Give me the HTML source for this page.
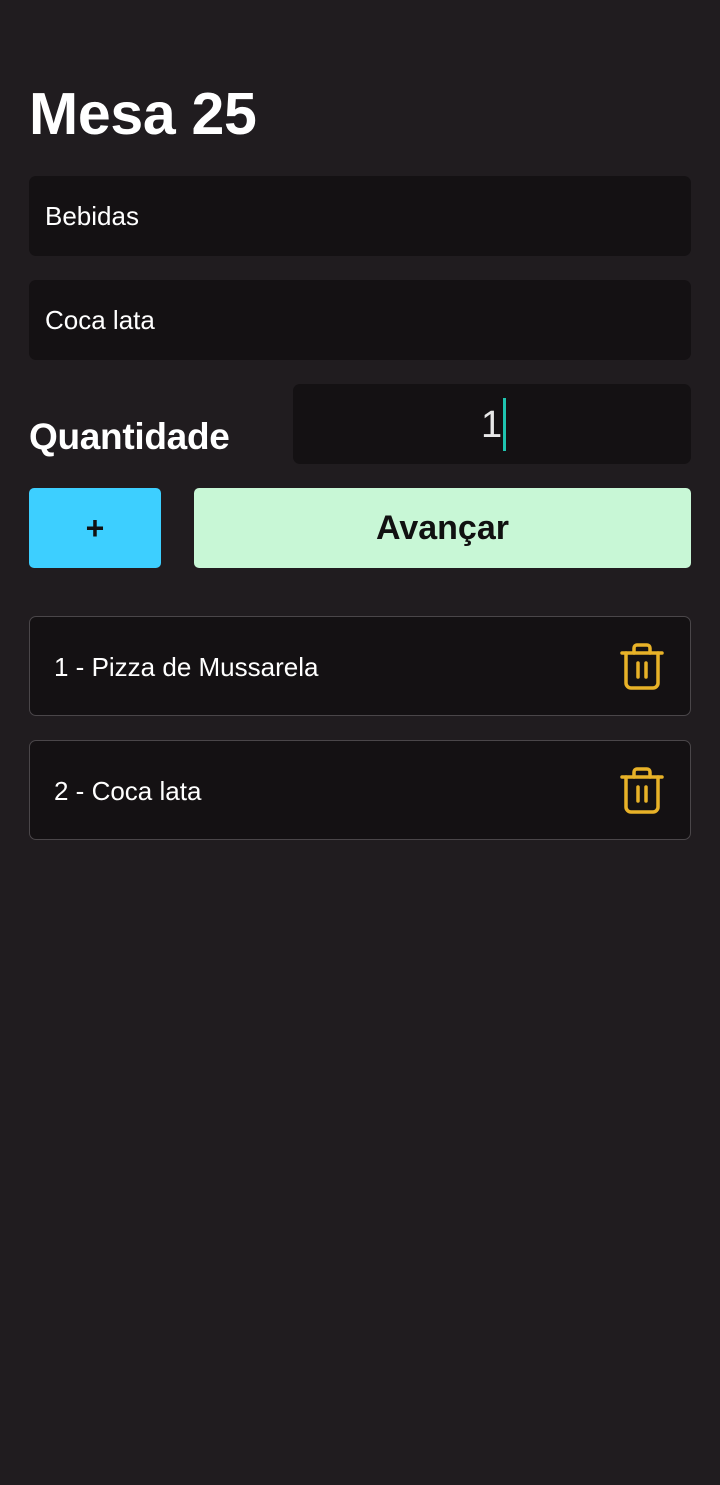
<!DOCTYPE html>
<html><head><meta charset="utf-8"><style>
*{margin:0;padding:0;box-sizing:border-box}
body{width:720px;height:1485px;background:#201c1f;font-family:"Liberation Sans",Arial,sans-serif;color:#fff;position:relative;overflow:hidden}
.a{position:absolute}
.in{background:#141113;border-radius:7px;left:29px;width:662px;height:80px;font-size:26px;padding-left:16px;line-height:80px}
h1{position:absolute;left:29px;top:80px;font-size:59px;font-weight:bold;letter-spacing:-0.3px}
.card{left:29px;width:662px;height:100px;background:#141113;border:1px solid #4a4649;border-radius:7px;font-size:26px;padding-left:24px;line-height:100px}
.card svg{position:absolute;left:589px;top:25px}
</style></head><body>
<h1>Mesa 25</h1>
<div class="a in" style="top:176px">Bebidas</div>
<div class="a in" style="top:280px">Coca lata</div>
<div class="a" style="left:29px;top:416px;font-size:37px;font-weight:bold;letter-spacing:-0.3px">Quantidade</div>
<div class="a" style="left:293px;top:384px;width:398px;height:80px;background:#141113;border-radius:7px"></div>
<div class="a" style="left:481px;top:404px;font-size:38px;color:#e8e8e8">1</div>
<div class="a" style="left:503px;top:398px;width:3px;height:53px;background:#1fc4b0"></div>
<div class="a" style="left:29px;top:488px;width:132px;height:80px;background:#3dcfff;border-radius:5px;color:#111;font-size:32px;font-weight:bold;text-align:center;line-height:80px">+</div>
<div class="a" style="left:194px;top:488px;width:497px;height:80px;background:#c8f7d6;border-radius:5px;color:#111;font-size:34px;font-weight:bold;text-align:center;line-height:80px">Avançar</div>
<div class="a card" style="top:616px">1 - Pizza de Mussarela
<svg width="46" height="50" viewBox="0 0 46 50" fill="none" stroke="#e8b228" stroke-width="3.5" stroke-linecap="round" stroke-linejoin="round"><path d="M3 11H43"/><path d="M15 11V6a3 3 0 0 1 3-3h10a3 3 0 0 1 3 3v5"/><path d="M7 11v30a5 5 0 0 0 5 5h22a5 5 0 0 0 5-5V11"/><path d="M19 21v14M27 21v14"/></svg></div>
<div class="a card" style="top:740px">2 - Coca lata
<svg width="46" height="50" viewBox="0 0 46 50" fill="none" stroke="#e8b228" stroke-width="3.5" stroke-linecap="round" stroke-linejoin="round"><path d="M3 11H43"/><path d="M15 11V6a3 3 0 0 1 3-3h10a3 3 0 0 1 3 3v5"/><path d="M7 11v30a5 5 0 0 0 5 5h22a5 5 0 0 0 5-5V11"/><path d="M19 21v14M27 21v14"/></svg></div>
</body></html>
